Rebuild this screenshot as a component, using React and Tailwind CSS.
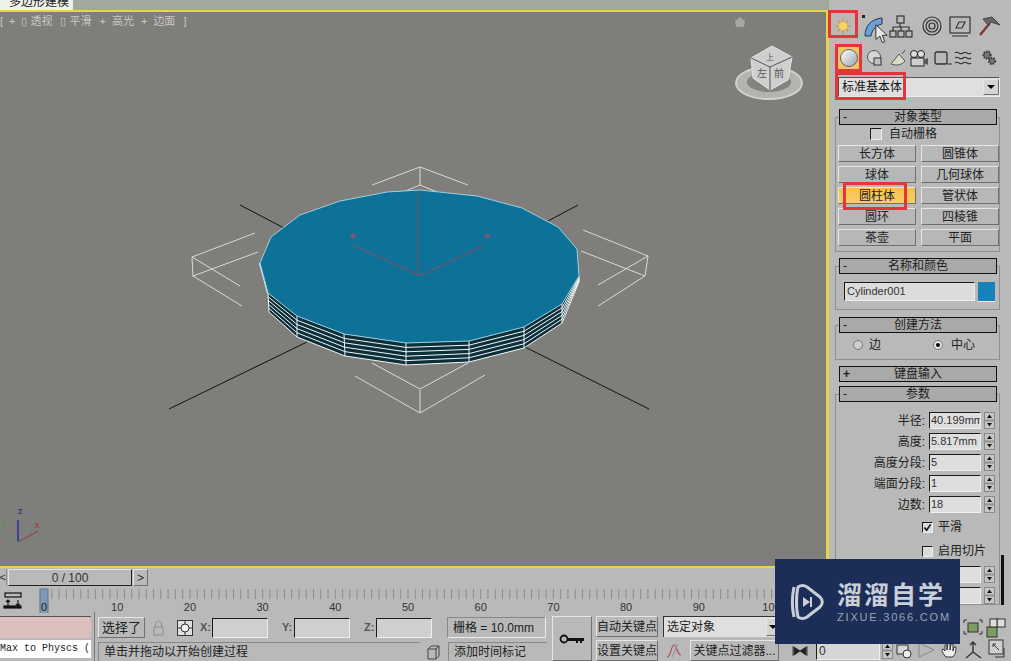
import React from "react";

const FONT = "font-['Liberation_Sans','Noto_Sans_CJK_SC',sans-serif]";
const RAISED = "border border-t-[#e6e6e6] border-l-[#e6e6e6] border-r-[#6f6f6f] border-b-[#6f6f6f]";
const SUNKEN = "border border-t-[#1c1c1c] border-l-[#1c1c1c] border-r-[#efefef] border-b-[#efefef]";

// cylinder outline, page coordinates
const TOP = [[260, 263], [271, 237], [300, 215], [340, 201], [387, 192], [420, 190], [477, 196], [522, 208], [558, 227], [577, 249], [579, 276], [562, 304], [524, 327], [469, 341], [406, 343], [344, 334], [297, 316], [268, 293]];
const RIM_TOP = [[268, 293], [297, 316], [344, 334], [406, 343], [469, 341], [524, 327], [562, 304], [579, 276]];
const RIM_BOT = [[269, 312], [297, 337], [345, 356], [406, 365], [469, 362], [524, 348], [562, 323], [579, 282]];

function pts(list) {
    return list.map((p) => p.join(",")).join(" ");
}

function ViewLabel() {
    // x offsets follow the viewport label in the screenshot
    return (
        <div className="absolute left-0 top-[1px] flex text-[11px] leading-[16px] text-[#c9c9c6] whitespace-nowrap">
            <span>[</span>
            <span className="ml-[6px]">+</span>
            <span className="ml-[5px]">▯</span>
            <span className="ml-[4px]">透视</span>
            <span className="ml-[7px]">▯</span>
            <span className="ml-[4px]">平滑</span>
            <span className="ml-[8px]">+</span>
            <span className="ml-[6px]">高光</span>
            <span className="ml-[7px]">+</span>
            <span className="ml-[6px]">边面</span>
            <span className="ml-[8px]">]</span>
        </div>
    );
}

function Viewport() {
    const levels = [0.2, 0.4, 0.6, 0.8];
    const box = [
        "372,185 420,167 468,185", "403,192 420,185 437,192", "420,167 420,185",
        "255,233 192,257 240,286", "192,257 193,277", "258,252 193,276 242,306",
        "583,230 648,256 598,285", "648,256 645,276", "581,251 645,276 598,306",
        "355,376 420,413 485,375", "420,390 420,413", "372,363 420,389 468,363",
    ];
    return (
        <div className="relative h-[558px] border-y-2 border-r-[3px] border-y-[#e8d44a] border-r-[#e8d44a] bg-[#7f7e7b] overflow-hidden">
            <svg className="block w-[826px] h-[554px]" viewBox="0 12 826 554">
                <g stroke="#111" strokeWidth="1">
                    <line x1="240" y1="205" x2="284" y2="228" />
                    <line x1="548" y1="221" x2="578" y2="205" />
                    <line x1="169" y1="409" x2="307" y2="342" />
                    <line x1="525" y1="347" x2="649" y2="409" />
                </g>
                <g fill="none" stroke="#d9d9d5" strokeWidth="1">
                    {box.map((b) => <polyline key={b} points={b} />)}
                </g>
                <polygon points={pts([...RIM_TOP, ...[...RIM_BOT].reverse()])} fill="#0d2f3a" />
                <g fill="none" stroke="#f2f6f6" strokeWidth="1">
                    {levels.map((t) => (
                        <polyline key={t} points={pts(RIM_TOP.map((p, i) => [p[0] + (RIM_BOT[i][0] - p[0]) * t, p[1] + (RIM_BOT[i][1] - p[1]) * t]))} />
                    ))}
                    <polyline points={pts(RIM_BOT)} />
                    {RIM_TOP.map((p, i) => <line key={i} x1={p[0]} y1={p[1]} x2={RIM_BOT[i][0]} y2={RIM_BOT[i][1]} />)}
                </g>
                <line x1="260" y1="263" x2="268" y2="293" stroke="#fff" strokeWidth="2" />
                <polygon points={pts(TOP)} fill="#0d7198" stroke="#9fd0e0" strokeWidth="1" />
                <g fill="none" stroke="#5f5a78" strokeWidth="1.5">
                    <line x1="418" y1="193" x2="418" y2="276" />
                    <polyline points="353,245 420,276 484,245" />
                </g>
                <circle cx="353" cy="236" r="2.5" fill="#7a5a70" />
                <circle cx="487" cy="236" r="2.5" fill="#7a5a70" />

                {/* viewcube */}
                <polygon points="740,17 745,21 744,27 736,27 735,21" fill="#a8a6a2" />
                <ellipse cx="769" cy="83" rx="33" ry="16" fill="#b4b3af" stroke="#d2d1cd" strokeWidth="2" />
                <ellipse cx="769" cy="82" rx="22" ry="10" fill="#85837f" />
                <polygon points="772,46 792,57 788,80 770,90 753,78 751,58" fill="#cfcfcf" stroke="#e4e4e4" />
                <polyline points="751,58 770,67 792,57" fill="none" stroke="#555" />
                <line x1="770" y1="67" x2="770" y2="90" stroke="#555" />
                <text x="757" y="77" fontSize="10" fill="#555">左</text>
                <text x="774" y="77" fontSize="10" fill="#555">前</text>
                <text x="766" y="60" fontSize="8" fill="#555">上</text>

                {/* axis tripod */}
                <line x1="18" y1="520" x2="18" y2="542" stroke="#2a2f9c" strokeWidth="1.5" />
                <line x1="18" y1="542" x2="38" y2="531" stroke="#8c3a3a" strokeWidth="1" />
                <line x1="18" y1="542" x2="2" y2="532" stroke="#4f9a5a" strokeWidth="1" />
                <text x="18" y="514" fontSize="9" fill="#23276e">z</text>
                <text x="35" y="528" fontSize="9" fill="#a82c2c">x</text>
                <text x="1" y="527" fontSize="9" fill="#4a9a50">y</text>
            </svg>
            <ViewLabel />
        </div>
    );
}

function Ruler() {
    const ticks = Array.from({ length: 101 }, (_, i) => 44.5 + i * 7.27);
    return (
        <div className="h-[27px] flex relative">
            <svg className="block w-[829px] h-[27px]" viewBox="0 585 829 27">
                <g stroke="#8b8b8b" strokeWidth="1">
                    {ticks.map((x) => <line key={x} x1={x} y1="588" x2={x} y2="598" />)}
                </g>
                <rect x="40" y="588" width="8" height="25" fill="#7f9ab5" stroke="#5b7690" />
                <text x="41" y="610" fontSize="11" fill="#222">0</text>
                {[10, 20, 30, 40, 50, 60, 70, 80, 90, 100].map((n) => (
                    <text key={n} x={44.5 + n * 7.27} y="610" fontSize="11" fill="#333" textAnchor="middle">{n}</text>
                ))}
                <g fill="none" stroke="#111" strokeWidth="1.2">
                    <rect x="5" y="592" width="16" height="4" />
                    <path d="M8 599v6M6 601l2-2 2 2M18 599v6M16 603l2 2 2-2" />
                    <rect x="4" y="605" width="17" height="2" fill="#111" />
                </g>
            </svg>
        </div>
    );
}

function TimeSlider() {
    return (
        <div className="h-[17px] mt-[1px] flex items-center text-[12px] text-[#333]">
            <div className="w-[7px] h-[17px] overflow-hidden flex justify-end items-center text-[11px] border-r border-[#8b8b8b]">&lt;</div>
            <div className={`ml-[1px] w-[124px] h-[17px] flex items-center justify-center bg-[#b9b9b9] ${RAISED} border-r-[#222] border-b-[#222] font-['Liberation_Sans'] text-[12px] leading-none`}>0 / 100</div>
            <div className={`ml-[1px] w-[15px] h-[17px] flex items-center justify-center ${RAISED}`}>&gt;</div>
        </div>
    );
}

function Header({ label, open }) {
    return (
        <div className="relative z-10 ml-[10px] w-[158px] h-[16px] border border-[#111] bg-[#a9a9a9] flex items-center text-[12px] leading-none text-[#1c1c1c]">
            <span className={`w-[8px] ml-[3px] ${open ? "font-bold" : ""}`}>{open ? "+" : "-"}</span>
            <span className="flex-1 text-center pr-[11px]">{label}</span>
        </div>
    );
}

function Body({ className = "", children }) {
    return <div className={`-mt-[8px] ml-[6px] w-[165px] border-x border-b border-x-[#8f8f8f] border-b-[#8f8f8f] border-t border-t-[#8f8f8f] ${className}`}>{children}</div>;
}

function CreateButton({ label, active }) {
    return (
        <div className={`h-[17px] flex items-center justify-center text-[12px] leading-none text-[#222] ${RAISED} ${active ? "bg-gradient-to-b from-[#f5c04e] to-[#f7cf62]" : "bg-[#b7b7b7]"}`}>
            {label}
        </div>
    );
}

function Spinner() {
    return (
        <svg className="block w-[11px] h-[17px] shrink-0" viewBox="0 0 11 17">
            <rect x="0.5" y="0.5" width="10" height="7.5" fill="#c6c6c6" stroke="#8a8a8a" />
            <rect x="0.5" y="9" width="10" height="7.5" fill="#c6c6c6" stroke="#8a8a8a" />
            <path d="M5.5 2.5l2.5 3.5h-5zM5.5 14.5l-2.5-3.5h5z" fill="#111" />
        </svg>
    );
}

function Param({ label, value }) {
    return (
        <div className="h-[17px] flex items-center justify-end pr-[4px] text-[12px] leading-none text-[#222]">
            {label && <span className="mr-[4px]">{label}:</span>}
            <div className={`w-[52px] h-[17px] mr-[3px] pl-[1px] flex items-center overflow-hidden whitespace-nowrap bg-[#dedede] text-[11px] text-[#333] ${SUNKEN}`}>{value}</div>
            <Spinner />
        </div>
    );
}

function Check({ label, checked }) {
    return (
        <div className="h-[16px] flex items-center pl-[86px] text-[12px] leading-none text-[#222]">
            <div className={`w-[11px] h-[11px] mr-[5px] flex items-center justify-center text-[10px] bg-[#dcdcdc] ${SUNKEN}`}>
                {checked && <svg viewBox="0 0 10 10" className="w-[9px] h-[9px]"><path d="M1.5 5l2.5 3 4.5-6.5" fill="none" stroke="#111" strokeWidth="1.8" /></svg>}
            </div>
            {label}
        </div>
    );
}

function TabIcons() {
    return (
        <div className="mt-[14px] h-[24px] flex pl-[3px]">
            <svg className="block w-[176px] h-[24px]" viewBox="0 0 176 24">
                <g stroke="#e08f2a" strokeWidth="1.2">
                    <path d="M11 4v16M3 12h16M5.5 6.5l11 11M16.5 6.5l-11 11" />
                </g>
                <circle cx="11" cy="12" r="4" fill="#f7d35a" />
                <path d="M33 22c0-10 6-17 17-18v6c-6 1-10 6-11 12z" fill="#6d9fd0" stroke="#1e3a5a" />
                <rect x="30" y="1" width="3" height="3" fill="#222" />
                <g fill="none" stroke="#333" strokeWidth="1.2">
                    <rect x="65" y="2" width="7" height="7" />
                    <rect x="58" y="17" width="6" height="6" />
                    <rect x="66" y="17" width="6" height="6" />
                    <rect x="74" y="17" width="6" height="6" />
                    <path d="M68 9v4M61 17v-4h16v4M69 13v4" />
                    <circle cx="100" cy="12" r="9" />
                    <circle cx="100" cy="12" r="6" />
                    <circle cx="100" cy="12" r="3" />
                    <rect x="118" y="3" width="20" height="16" />
                    <path d="M120 22h16M124 14l3-6h6l-3 6z" />
                </g>
                <path d="M148 21l10-12" stroke="#7d3b34" strokeWidth="2.5" />
                <path d="M151 5l9-2 8 8-9-3-3 3z" fill="#666" stroke="#444" />
            </svg>
        </div>
    );
}

function SubIcons() {
    return (
        <div className="mt-[8px] h-[24px] flex pl-[8px]">
            <div className="w-[24px] h-[24px] flex items-center justify-center bg-[#f0c468] border border-[#8a7440]">
                <div className="w-[18px] h-[18px] rounded-full bg-gradient-to-br from-white to-[#9aa4ad] border border-[#666]" />
            </div>
            <svg className="block ml-[3px] w-[144px] h-[24px]" viewBox="0 0 144 24">
                <circle cx="10" cy="11" r="6.5" fill="#d5d5d5" stroke="#555" />
                <rect x="10" y="12" width="7" height="7" fill="#c0c0c0" stroke="#333" />
                <path d="M27 18l8-10 6 7c-3 4-9 5-14 3z" fill="#d8dcc0" stroke="#555" />
                <path d="M38 8l3-4" stroke="#555" />
                <circle cx="50" cy="8" r="3.5" fill="#ddd" stroke="#222" />
                <circle cx="57" cy="8" r="3.5" fill="#ddd" stroke="#222" />
                <rect x="47" y="12" width="13" height="8" fill="#cfcfcf" stroke="#222" />
                <path d="M60 14l4-2v7l-4-2z" fill="#555" />
                <rect x="71" y="6" width="12" height="12" rx="2" fill="none" stroke="#333" strokeWidth="1.3" />
                <path d="M83 18h5" stroke="#333" />
                <path d="M91 7c3-3 5 3 8 0s5 3 8 0M91 12c3-3 5 3 8 0s5 3 8 0M91 17c3-3 5 3 8 0s5 3 8 0" fill="none" stroke="#333" strokeWidth="1.2" />
                <circle cx="123" cy="9" r="3.5" fill="#777" stroke="#333" strokeDasharray="1.5 1" strokeWidth="2" />
                <circle cx="128" cy="15" r="3" fill="#777" stroke="#333" strokeDasharray="1.5 1" strokeWidth="2" />
            </svg>
        </div>
    );
}

function CommandPanel() {
    const buttons = [["长方体", "圆锥体"], ["球体", "几何球体"], ["圆柱体", "管状体"], ["圆环", "四棱锥"], ["茶壶", "平面"]];
    return (
        <div className="relative w-[182px] h-[612px] overflow-hidden bg-[#b9b9b9]">
            <TabIcons />
            <SubIcons />
            <div className="mt-[7px] ml-[9px] w-[162px] h-[20px] flex items-center justify-between bg-[#dfdfdf] border border-t-[#555] border-l-[#555] border-r-[#eee] border-b-[#eee] text-[12px] leading-none text-[#111] pl-[3px]">
                标准基本体
                <div className={`w-[16px] h-[16px] flex items-center justify-center bg-[#d4d4d4] ${RAISED}`}>
                    <div className="w-0 h-0 border-x-[4px] border-t-[4px] border-x-transparent border-t-black" />
                </div>
            </div>

            <div className="mt-[12px]"><Header label="对象类型" /></div>
            <Body className="pt-[7px] pb-[5px]">
                <div className="h-[18px] flex items-center pl-[34px] text-[12px] leading-none text-[#222]">
                    <div className={`w-[12px] h-[12px] mr-[7px] bg-[#cfcfcf] ${SUNKEN}`} />
                    自动栅格
                </div>
                <div className="mt-[2px] ml-[2px] grid grid-cols-[78px_78px] gap-x-[5px] gap-y-[4px]">
                    {buttons.flat().map((b) => <CreateButton key={b} label={b} active={b === "圆柱体"} />)}
                </div>
            </Body>

            <div className="mt-[6px]"><Header label="名称和颜色" /></div>
            <Body className="pt-[15px] pb-[7px]">
                <div className="flex pl-[8px]">
                    <div className={`w-[131px] h-[19px] pl-[2px] flex items-center text-[11px] text-[#333] bg-[#dcdcdc] ${SUNKEN}`}>Cylinder001</div>
                    <div className="ml-[3px] w-[17px] h-[20px] bg-[#1583ba] border-b border-[#eee]" />
                </div>
            </Body>

            <div className="mt-[7px]"><Header label="创建方法" /></div>
            <Body className="pt-[9px] pb-[4px]">
                <div className="h-[20px] flex items-center text-[12px] leading-none text-[#222]">
                    <div className="ml-[17px] w-[10px] h-[10px] rounded-full bg-[#cfcfcf] border border-[#777]" />
                    <span className="ml-[6px]">边</span>
                    <div className="ml-[52px] w-[10px] h-[10px] rounded-full bg-[#e6e6e6] border border-[#777] flex items-center justify-center">
                        <div className="w-[4px] h-[4px] rounded-full bg-black" />
                    </div>
                    <span className="ml-[8px]">中心</span>
                </div>
            </Body>

            <div className="mt-[6px]"><Header label="键盘输入" open /></div>
            <div className="mt-[4px]"><Header label="参数" /></div>
            <Body className="pt-[17px]">
                <div className="flex flex-col gap-y-[4px]">
                    <Param label="半径" value="40.199mm" />
                    <Param label="高度" value="5.817mm" />
                    <Param label="高度分段" value="5" />
                    <Param label="端面分段" value="1" />
                    <Param label="边数" value="18" />
                </div>
                <div className="mt-[6px]"><Check label="平滑" checked /></div>
                <div className="mt-[8px]"><Check label="启用切片" /></div>
                <div className="mt-[7px] flex flex-col gap-y-[4px]">
                    <Param value="" />
                    <Param value="" />
                </div>
            </Body>
            <div className="absolute left-[172px] top-[555px] w-[3px] h-[50px] bg-[#111]" />
        </div>
    );
}

function Field({ label, w = 56 }) {
    return (
        <div className="flex items-center text-[12px] text-[#333]">
            <span className="w-[11px] font-bold text-[11px] text-[#555]">{label}</span>
            <div className={`ml-[1px] h-[20px] bg-[#cfcfcf] ${SUNKEN}`} style={{ width: w }} />
        </div>
    );
}

function SmallIcons({ children, w, h = 22 }) {
    return <svg className="block shrink-0" width={w} height={h} viewBox={`0 0 ${w} ${h}`}>{children}</svg>;
}

function BottomBar() {
    return (
        <div className="h-[49px] flex text-[12px] leading-none text-[#222] bg-[#b9b9b9]">
            <div className="w-[91px] shrink-0 pt-[4px] overflow-hidden">
                <div className="h-[22px] bg-[#dcc0bd] border-t border-[#555]" />
                <div className="mt-[2px] h-[18px] flex items-center bg-white font-['Liberation_Mono'] text-[10px] whitespace-pre">Max to Physcs (</div>
            </div>
            <div className="ml-[3px] w-[1px] bg-[#777]" />
            <div className="ml-[3px] w-[449px] shrink-0 pt-[5px]">
                <div className="h-[21px] flex items-center">
                    <div className={`w-[47px] h-[21px] flex items-center justify-center text-[13px] ${RAISED}`}>选择了</div>
                    <SmallIcons w={32}>
                        <rect x="9" y="10" width="9" height="8" fill="none" stroke="#8e8e8e" />
                        <path d="M10.5 10V7a3 3 0 0 1 6 0v3" fill="none" stroke="#8e8e8e" />
                    </SmallIcons>
                    <svg className="block shrink-0" width="16" height="16" viewBox="0 0 16 16">
                        <rect x="0.5" y="0.5" width="15" height="15" fill="#e0e0e0" stroke="#333" />
                        <circle cx="8" cy="8" r="4" fill="#f2f2f2" stroke="#333" />
                        <path d="M8 1v3M8 12v3M1 8h3M12 8h3" stroke="#333" />
                    </svg>
                    <div className="ml-[7px]"><Field label="X:" /></div>
                    <div className="ml-[14px]"><Field label="Y:" /></div>
                    <div className="ml-[14px]"><Field label="Z:" /></div>
                    <div className="ml-[15px] w-[99px] h-[21px] flex items-center pl-[5px] border border-t-[#888] border-l-[#888] border-b-[#eee] border-r-[#eee] text-[12px]">栅格 = 10.0mm</div>
                </div>
                <div className="mt-[4px] flex items-center">
                    <div className="w-[322px] h-[19px] pl-[5px] flex items-center border-t border-l border-[#888] text-[12px]">单击并拖动以开始创建过程</div>
                    <SmallIcons w={28} h={19}>
                        <path d="M8 7l3-3h8v10l-3 3H8zM8 7h8v10M16 7l3-3" fill="none" stroke="#444" />
                    </SmallIcons>
                    <div className="w-[99px] h-[19px] flex items-center pl-[5px] border-t border-l border-[#888] text-[12px]">添加时间标记</div>
                </div>
            </div>
            <div className={`ml-[5px] mt-[4px] w-[40px] h-[45px] flex items-center justify-center shrink-0 ${RAISED}`}>
                <svg width="26" height="12" viewBox="0 0 26 12">
                    <circle cx="5" cy="6" r="3.5" fill="none" stroke="#111" strokeWidth="1.8" />
                    <path d="M9 5h16v3h-2v2h-2V8h-2v2h-2V8H9z" fill="#111" />
                </svg>
            </div>
            <div className="ml-[4px] mt-[4px] w-[62px] shrink-0">
                <div className={`h-[21px] flex items-center justify-center whitespace-nowrap ${RAISED}`}>自动关键点</div>
                <div className={`mt-[3px] h-[21px] flex items-center justify-center whitespace-nowrap ${RAISED}`}>设置关键点</div>
            </div>
            <div className="ml-[5px] mt-[4px] w-[230px] shrink-0">
                <div className="w-[117px] h-[21px] pl-[3px] flex items-center justify-between bg-[#dfdfdf] border-t border-l border-[#333] text-[12px]">
                    选定对象
                    <div className={`w-[14px] h-[18px] flex items-center justify-center bg-[#d4d4d4] ${RAISED}`}>
                        <div className="w-0 h-0 border-x-[4px] border-t-[4px] border-x-transparent border-t-black" />
                    </div>
                </div>
                <div className="mt-[3px] flex items-center">
                    <SmallIcons w={27} h={21}>
                        <path d="M4 17c4 0 4-12 7-12s3 10 7 10" fill="none" stroke="#b3505a" strokeWidth="1.2" />
                        <path d="M9 17L15 4" stroke="#8c8ea6" />
                    </SmallIcons>
                    <div className={`w-[90px] h-[21px] flex items-center justify-center whitespace-nowrap ${RAISED}`}>关键点过滤器...</div>
                    <svg className="ml-[13px] block shrink-0" width="16" height="12" viewBox="0 0 16 12">
                        <path d="M1 1v10M15 1v10M8 6L2 2v8zM8 6l6-4v8z" fill="#222" stroke="#222" strokeWidth="0.8" />
                    </svg>
                    <div className={`ml-[8px] w-[64px] h-[18px] pl-[2px] flex items-center text-[#333] shrink-0 ${SUNKEN} bg-[#d6d6d6]`}>0</div>
                    <div className="ml-[2px]"><Spinner /></div>
                </div>
            </div>
            <NavIcons />
        </div>
    );
}

function NavIcons() {
    return (
        <svg className="block shrink-0" width="118" height="49" viewBox="893 612 118 49">
            <g fill="none" stroke="#333" strokeWidth="1">
                <path d="M964 620h3M979 620h3M964 620v3M982 620v3M964 634h3M979 634h3M964 634v-3M982 634v-3" />
                <rect x="968" y="623" width="10" height="9" fill="#7f9a62" />
                <rect x="987" y="627" width="10" height="10" fill="#7f9a62" />
                <rect x="997" y="619" width="8" height="8" fill="#ddd" />
                <rect x="990" y="619" width="7" height="8" fill="#ddd" />
                <rect x="897" y="645" width="11" height="9" fill="#d5d5d5" />
                <circle cx="907" cy="654" r="4" fill="#eee" />
                <path d="M919 643v14l15-7z" stroke="#888" />
                <path d="M945 656c-3-4-4-7-2-7l2 2v-6h2v5l1-7h2v7l1-6h2v7l1-4h2c0 5-1 9-4 10h-6z" fill="#eee" />
                <path d="M973 642v10M973 652l-7 6M973 652l8 6M970 645l3-3 3 3" strokeWidth="1.4" />
                <rect x="989" y="640" width="14" height="14" fill="#cfcfcf" />
                <path d="M993 644l6 6M993 644h3M993 644v3" />
                <path d="M1004 648v9h-9" />
            </g>
        </svg>
    );
}

function Watermark() {
    return (
        <div className="absolute left-[775px] top-[559px] w-[185px] h-[85px] flex items-center bg-[#1c2d57] text-[#c9ced8]">
            <svg className="ml-[14px] block" width="36" height="38" viewBox="0 0 36 38">
                <path d="M5 4c-2 9-2 21 0 30M9 4c3-2 6-2 9 0l13 10c3 3 3 7 0 10L18 34c-3 2-6 2-9 0-2-8-2-22 0-30z" fill="none" stroke="#c9ced8" strokeWidth="3" strokeLinejoin="round" />
                <path d="M14 14l7 5-7 5z" fill="#c9ced8" />
                <rect x="21" y="14" width="2" height="10" fill="#c9ced8" />
            </svg>
            <div className="ml-[12px]">
                <div className="text-[25px] leading-[28px] font-bold tracking-[2px] whitespace-nowrap">溜溜自学</div>
                <div className="mt-[2px] text-[11px] leading-[12px] tracking-[1.8px] text-[#9aa3b5] whitespace-nowrap">ZIXUE.3066.COM</div>
            </div>
        </div>
    );
}

function RedBoxes() {
    return (
        <>
            <div className="absolute left-[828px] top-[10px] w-[30px] h-[28px] border-[3px] border-[#e4353a]" />
            <div className="absolute left-[835px] top-[44px] w-[27px] h-[28px] border-[3px] border-[#e4353a]" />
            <div className="absolute left-[835px] top-[72px] w-[71px] h-[28px] border-[3px] border-[#e4353a]" />
            <div className="absolute left-[843px] top-[182px] w-[64px] h-[28px] border-[3px] border-[#e4353a]" />
            <svg className="absolute left-[874px] top-[24px]" width="15" height="21" viewBox="0 0 18 26">
                <path d="M2 1v18l5-4 3 8 3-1-3-8h6z" fill="#e8e8e8" stroke="#111" />
            </svg>
        </>
    );
}

export default function App() {
    return (
        <div className={`relative w-[1011px] h-[661px] overflow-hidden bg-[#b9b9b9] ${FONT}`}>
            <div className="flex h-[612px]">
                <div className="w-[829px] shrink-0">
                    <div className="h-[10px] bg-[#a3a89e] overflow-hidden">
                        <div className="w-[73px] h-[10px] bg-[#eef0ea] pl-[9px] text-[12px] leading-[4px] text-[#222]">多边形建模</div>
                    </div>
                    <Viewport />
                    <TimeSlider />
                    <Ruler />
                </div>
                <CommandPanel />
            </div>
            <BottomBar />
            <RedBoxes />
            <Watermark />
        </div>
    );
}
